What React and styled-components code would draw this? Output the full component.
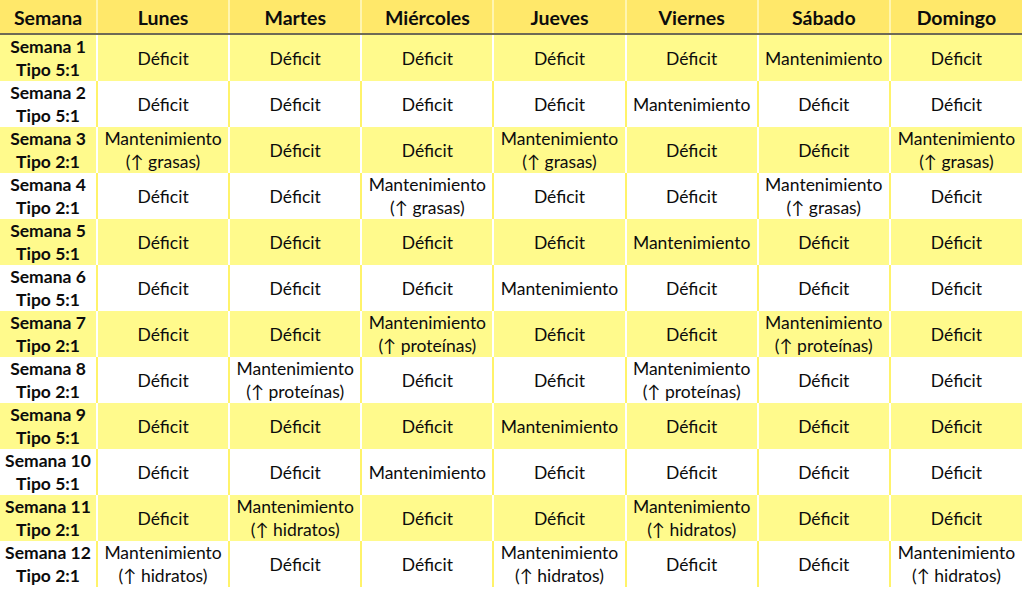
import React from 'react'
import styled, { createGlobalStyle } from 'styled-components'

const Global = createGlobalStyle`
  body {
    margin: 0;
    background: #ffffff;
    font-family: Lato, "Noto Sans", sans-serif;
    color: #0c0c0c;
  }
`

const Table = styled.table`
  width: 1022px;
  border-collapse: collapse;
  table-layout: fixed;
`

const HeadCell = styled.th`
  height: 30px;
  padding: 3px 0 0;
  background: #ffe86a;
  border-right: 2px solid #fff5b0;
  border-bottom: 2px solid #6e6a55;
  font-size: 19.5px;
  line-height: 24px;
  font-weight: 700;
  text-align: center;
  &:last-child { border-right: none; }
`

const Row = styled.tr`
  background: ${p => (p.$shaded ? '#fffa8c' : '#ffffff')};
`

const Cell = styled.td`
  height: 46px;
  padding: 0;
  text-align: center;
  vertical-align: middle;
  font-size: 17.5px;
  line-height: 23px;
  border-right: 2px solid ${p => (p.$shaded ? '#ffffff' : '#fff36a')};
  &:last-child { border-right: none; }
`

const WeekCell = styled(Cell)`
  font-weight: 700;
`

const days = ['Lunes', 'Martes', 'Miércoles', 'Jueves', 'Viernes', 'Sábado', 'Domingo']

const D = 'Déficit'
const M = 'Mantenimiento'
const G = 'grasas'
const P = 'proteínas'
const H = 'hidratos'

const m = x => ({ main: M, extra: x })

const weeks = [
  { tipo: '5:1', cells: [D, D, D, D, D, M, D] },
  { tipo: '5:1', cells: [D, D, D, D, M, D, D] },
  { tipo: '2:1', cells: [m(G), D, D, m(G), D, D, m(G)] },
  { tipo: '2:1', cells: [D, D, m(G), D, D, m(G), D] },
  { tipo: '5:1', cells: [D, D, D, D, M, D, D] },
  { tipo: '5:1', cells: [D, D, D, M, D, D, D] },
  { tipo: '2:1', cells: [D, D, m(P), D, D, m(P), D] },
  { tipo: '2:1', cells: [D, m(P), D, D, m(P), D, D] },
  { tipo: '5:1', cells: [D, D, D, M, D, D, D] },
  { tipo: '5:1', cells: [D, D, M, D, D, D, D] },
  { tipo: '2:1', cells: [D, m(H), D, D, m(H), D, D] },
  { tipo: '2:1', cells: [m(H), D, D, m(H), D, D, m(H)] },
]

export default function App() {
  return (
    <>
      <Global />
      <Table>
        <colgroup>
          <col style={{ width: 97 }} />
          {days.map(d => <col key={d} />)}
        </colgroup>
        <thead>
          <tr>
            <HeadCell>Semana</HeadCell>
            {days.map(d => <HeadCell key={d}>{d}</HeadCell>)}
          </tr>
        </thead>
        <tbody>
          {weeks.map((w, i) => {
            const shaded = i % 2 === 0
            return (
              <Row key={i} $shaded={shaded}>
                <WeekCell $shaded={shaded}>
                  Semana {i + 1}<br />Tipo {w.tipo}
                </WeekCell>
                {w.cells.map((c, j) => (
                  <Cell key={j} $shaded={shaded}>
                    {typeof c === 'string' ? c : (<>{c.main}<br />(↑ {c.extra})</>)}
                  </Cell>
                ))}
              </Row>
            )
          })}
        </tbody>
      </Table>
    </>
  )
}
